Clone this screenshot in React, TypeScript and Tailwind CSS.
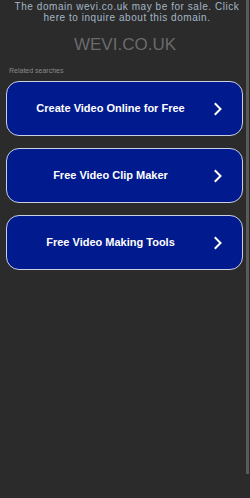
const searches = [
  'Create Video Online for Free',
  'Free Video Clip Maker',
  'Free Video Making Tools',
]

const Chevron = () => (
  <svg width="10" height="14" viewBox="0 0 10 14" fill="none">
    <path d="M2.5 2l5 5-5 5" stroke="currentColor" strokeWidth="2" strokeLinecap="square" />
  </svg>
)

export default function App() {
  return (
    <div className="relative h-[498px] w-[250px] overflow-hidden bg-[#2b2b2b] font-['Liberation_Sans',Arial,sans-serif]">
      <div className="whitespace-nowrap pl-[4px] pt-[1px] text-center text-[10px] leading-[11px] tracking-[0.55px] text-[#a3b6c6]">
        The domain wevi.co.uk may be for sale. Click
        <br />
        here to inquire about this domain.
      </div>
      <div className="mt-[12px] text-center text-[17px] leading-[20px] text-[#6a6a6a]">WEVI.CO.UK</div>
      <div className="ml-[9px] mt-[12px] text-[7px] leading-[8px] text-[#8a8a8a]">Related searches</div>
      <div className="mx-[6px] mt-[6px] flex w-[237px] flex-col gap-[12px]">
        {searches.map(s => (
          <div
            key={s}
            className="flex h-[55px] items-center rounded-[13px] border-[1.5px] border-[#c9d0e2] bg-[#011a8e] text-white"
          >
            <div className="flex-1 pl-[16px] text-center text-[11px] font-bold">{s}</div>
            <div className="flex w-[44px] justify-center pr-[4px]">
              <Chevron />
            </div>
          </div>
        ))}
      </div>
      <div className="absolute right-[1px] top-0 h-[474px] w-[3px] bg-[#5a5a5a]" />
    </div>
  )
}
